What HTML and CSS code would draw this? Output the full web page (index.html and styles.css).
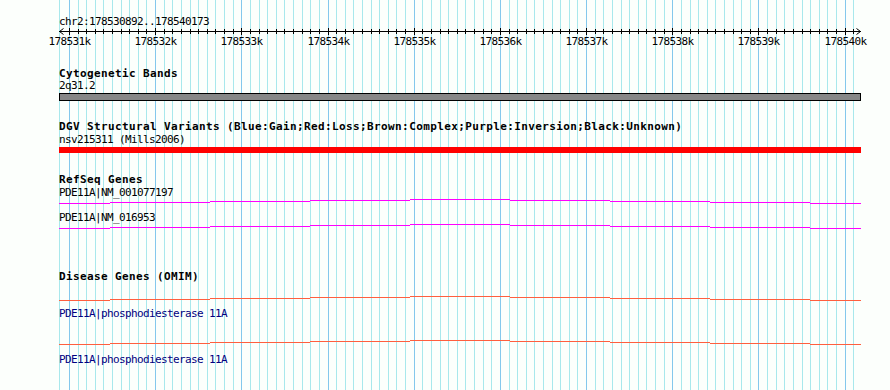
FILE: index.html
```html
<!DOCTYPE html>
<html lang="en">
<head>
  <meta charset="UTF-8">
  <title>chr2:178530892..178540173</title>
  <link rel="stylesheet" href="styles.css">
</head>
<body>
  <div class="browser">
    <svg class="grid" id="grid" width="890" height="390"></svg>

    <div class="tracks">
      <div class="locus">chr2:178530892..178540173</div>
      <svg class="ruler" id="ruler" width="890" height="20"></svg>

      <div class="track-title cyto-title">Cytogenetic Bands</div>
      <div class="feature-label">2q31.2</div>
      <div class="band"></div>

      <div class="track-title dgv-title">DGV Structural Variants (Blue:Gain;Red:Loss;Brown:Complex;Purple:Inversion;Black:Unknown)</div>
      <div class="feature-label dgv-label">nsv215311 (Mills2006)</div>
      <div class="variant-bar"></div>

      <div class="track-title refseq-title">RefSeq Genes</div>
      <div class="feature-label refseq-label">PDE11A|NM_001077197</div>
      <svg class="gene refseq" width="890" height="5"></svg>
      <div class="feature-label refseq-label2">PDE11A|NM_016953</div>
      <svg class="gene refseq" width="890" height="5"></svg>

      <div class="track-title omim-title">Disease Genes (OMIM)</div>
      <svg class="gene omim omim-line1" width="890" height="5"></svg>
      <div class="feature-label omim-label omim-label1">PDE11A|phosphodiesterase 11A</div>
      <svg class="gene omim omim-line2" width="890" height="5"></svg>
      <div class="feature-label omim-label omim-label2">PDE11A|phosphodiesterase 11A</div>
    </div>
  </div>

  <script>
    const START = 178530892, END = 178540173;
    const NS = "http://www.w3.org/2000/svg";

    function xpos(bp) {
      return Math.round(59.6 + (bp - START) * 800 / (END - START));
    }

    function el(name, attrs, parent) {
      const node = document.createElementNS(NS, name);
      for (const k in attrs) node.setAttribute(k, attrs[k]);
      parent.appendChild(node);
      return node;
    }

    // background grid, one line every 100bp
    const grid = document.getElementById("grid");
    el("rect", { x: 59, y: 0, width: 1, height: 390, class: "minor" }, grid);
    for (let bp = 178531000; bp <= 178540100; bp += 100) {
      el("rect", { x: xpos(bp), y: 0, width: 1, height: 390, class: bp % 1000 === 0 ? "major" : "minor" }, grid);
    }

    // ruler: line, arrows, ticks and labels (svg top sits at y=28)
    const ruler = document.getElementById("ruler");
    el("rect", { x: 59, y: 3, width: 802, height: 1 }, ruler);
    el("path", { d: "M63.5 0.5 L59.5 3.5 L63.5 6.5", class: "arrow" }, ruler);
    el("path", { d: "M856.5 0.5 L860.5 3.5 L856.5 6.5", class: "arrow" }, ruler);
    for (let bp = 178531000; bp <= 178540100; bp += 100) {
      const x = xpos(bp);
      const major = bp % 1000 === 0;
      el("rect", { x: x, y: major ? 0 : 1, width: 1, height: major ? 7 : 5 }, ruler);
      if (major) {
        const t = el("text", { x: x + 0.5, y: 17, class: "tick-label" }, ruler);
        t.textContent = (bp / 1000) + "k";
      }
    }

    const edges = [59, 110, 210, 310, 410, 510, 610, 710, 810, 861];
    const lift = [4, 3, 2, 1, 0, 1, 2, 3, 4];
    document.querySelectorAll(".gene").forEach(svg => {
      for (let i = 0; i < lift.length; i++) {
        el("rect", { x: edges[i], y: lift[i], width: edges[i + 1] - edges[i], height: 1 }, svg);
      }
    });
  </script>
</body>
</html>
```

FILE: styles.css
```css
* { box-sizing: border-box; }
body {
  margin: 0;
  background: #fcfffc;
  font-family: "DejaVu Sans Mono", "Liberation Mono", monospace;
}

.browser {
  position: relative;
  width: 890px;
  height: 390px;
  overflow: hidden;
}

.grid {
  position: absolute;
  top: 0;
  left: 0;
}

.grid .minor { fill: #a8e8ec; }
.grid .major { fill: #84c8ec; }

.tracks {
  position: relative;
  padding-top: 16px;
}

.locus,
.track-title,
.feature-label {
  padding-left: 59px;
  font-size: 11px;
  line-height: 12px;
  height: 12px;
  white-space: nowrap;
  color: #000;
}

.locus,
.feature-label {
  letter-spacing: -0.62px;
}

.track-title {
  font-weight: bold;
  letter-spacing: 0.38px;
}

.ruler,
.gene {
  display: block;
}

.ruler rect { fill: #000; }
.ruler .arrow {
  fill: none;
  stroke: #000;
  stroke-width: 1;
}

.tick-label {
  font-family: "DejaVu Sans Mono", monospace;
  font-size: 11px;
  letter-spacing: -0.62px;
  text-anchor: middle;
  fill: #000;
}

.cyto-title { margin-top: 20px; }

.band {
  margin-top: 1px;
  margin-left: 59px;
  width: 802px;
  height: 8px;
  border: 1px solid #000;
  background: #878787;
}

.dgv-title { margin-top: 20px; }
.dgv-label { margin-top: 1px; }

.variant-bar {
  margin-top: 1px;
  margin-left: 59px;
  width: 802px;
  height: 6px;
  background: #ff0000;
}

.refseq-title { margin-top: 21px; }
.refseq-label { margin-top: 1px; }
.refseq-label2 { margin-top: 8px; }
.gene.refseq rect { fill: #ff00ff; }

.omim-title { margin-top: 42px; }
.gene.omim rect { fill: #ff5f3f; }
.omim-line1 { margin-top: 13px; }
.omim-label { color: #000080; }
.omim-label1 { margin-top: 7px; }
.omim-line2 { margin-top: 20px; }
.omim-label2 { margin-top: 9px; }
```
